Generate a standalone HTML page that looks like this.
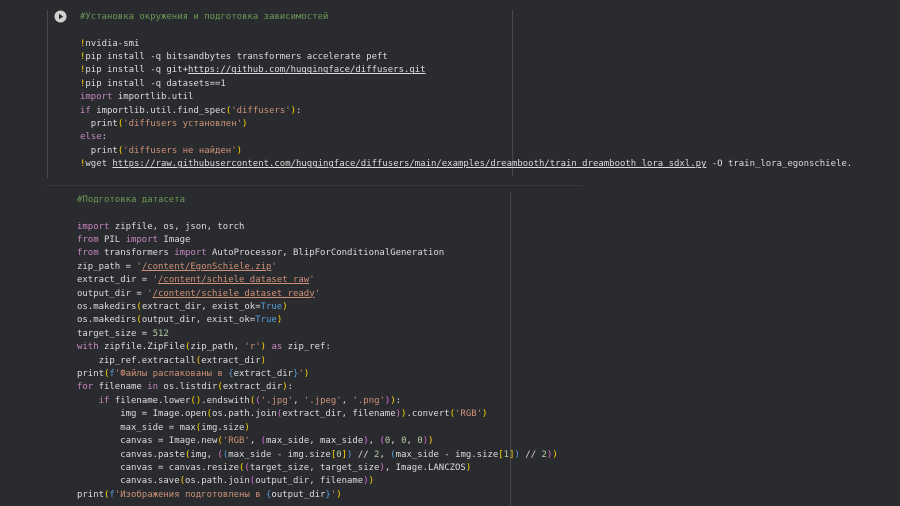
<!DOCTYPE html>
<html><head><meta charset="utf-8"><style>
body{margin:0;width:900px;height:506px;background:#2a2b2e;overflow:hidden;position:relative}
pre{position:absolute;margin:0;font-family:"DejaVu Sans Mono","Liberation Mono",monospace;font-size:8.98px;line-height:13.4px;color:#dcdcdc;white-space:pre}
.k{color:#c586c0}.s{color:#ce9178}.c{color:#6a9955}.n{color:#b5cea8}.b{color:#569cd6}.y{color:#ffd700}.p{color:#da70d6}
.u{text-decoration:underline}
.l{position:absolute;background:#45474b}
</style></head><body>
<div class="l" style="left:47px;top:10px;width:1px;height:168px"></div>
<div class="l" style="left:512px;top:10px;width:1px;height:166px"></div>
<div class="l" style="left:47px;top:185px;width:536px;height:1px;background:#38393c"></div>
<div class="l" style="left:510px;top:192px;width:1px;height:314px"></div>
<svg style="position:absolute;left:54px;top:10px" width="13" height="13"><circle cx="6.5" cy="6.5" r="6" fill="#d0d0d0"/><path d="M5 3.8L9.2 6.5L5 9.2Z" fill="#2a2b2e"/></svg>
<pre style="left:80px;top:10.8px"><span class="c">#Установка окружения и подготовка зависимостей</span>

<span class="y">!</span>nvidia-smi
<span class="y">!</span>pip install -q bitsandbytes transformers accelerate peft
<span class="y">!</span>pip install -q git+<span class="u">https://github.com/huggingface/diffusers.git</span>
<span class="y">!</span>pip install -q datasets==1
<span class="k">import</span> importlib.util
<span class="k">if</span> importlib.util.find_spec<span class="y">(</span><span class="s">'diffusers'</span><span class="y">)</span>:
  print<span class="y">(</span><span class="s">'diffusers установлен'</span><span class="y">)</span>
<span class="k">else</span>:
  print<span class="y">(</span><span class="s">'diffusers не найден'</span><span class="y">)</span>
<span class="y">!</span>wget <span class="u">https://raw.githubusercontent.com/huggingface/diffusers/main/examples/dreambooth/train_dreambooth_lora_sdxl.py</span> -O train_lora_egonschiele.</pre>
<pre style="left:77px;top:193.8px"><span class="c">#Подготовка датасета</span>

<span class="k">import</span> zipfile, os, json, torch
<span class="k">from</span> PIL <span class="k">import</span> Image
<span class="k">from</span> transformers <span class="k">import</span> AutoProcessor, BlipForConditionalGeneration
zip_path = <span class="s">'<span class="u">/content/EgonSchiele.zip</span>'</span>
extract_dir = <span class="s">'<span class="u">/content/schiele_dataset_raw</span>'</span>
output_dir = <span class="s">'<span class="u">/content/schiele_dataset_ready</span>'</span>
os.makedirs<span class="y">(</span>extract_dir, exist_ok=<span class="b">True</span><span class="y">)</span>
os.makedirs<span class="y">(</span>output_dir, exist_ok=<span class="b">True</span><span class="y">)</span>
target_size = <span class="n">512</span>
<span class="k">with</span> zipfile.ZipFile<span class="y">(</span>zip_path, <span class="s">'r'</span><span class="y">)</span> <span class="k">as</span> zip_ref:
    zip_ref.extractall<span class="y">(</span>extract_dir<span class="y">)</span>
print<span class="y">(</span><span class="b">f</span><span class="s">'Файлы распакованы в </span><span class="b">{</span>extract_dir<span class="b">}</span><span class="s">'</span><span class="y">)</span>
<span class="k">for</span> filename <span class="k">in</span> os.listdir<span class="y">(</span>extract_dir<span class="y">)</span>:
    <span class="k">if</span> filename.lower<span class="y">()</span>.endswith<span class="y">(</span><span class="p">(</span><span class="s">'.jpg'</span>, <span class="s">'.jpeg'</span>, <span class="s">'.png'</span><span class="p">)</span><span class="y">)</span>:
        img = Image.open<span class="y">(</span>os.path.join<span class="p">(</span>extract_dir, filename<span class="p">)</span><span class="y">)</span>.convert<span class="y">(</span><span class="s">'RGB'</span><span class="y">)</span>
        max_side = max<span class="y">(</span>img.size<span class="y">)</span>
        canvas = Image.new<span class="y">(</span><span class="s">'RGB'</span>, <span class="p">(</span>max_side, max_side<span class="p">)</span>, <span class="p">(</span><span class="n">0</span>, <span class="n">0</span>, <span class="n">0</span><span class="p">)</span><span class="y">)</span>
        canvas.paste<span class="y">(</span>img, <span class="p">(</span><span class="b">(</span>max_side - img.size<span class="y">[</span><span class="n">0</span><span class="y">]</span><span class="b">)</span> // <span class="n">2</span>, <span class="b">(</span>max_side - img.size<span class="y">[</span><span class="n">1</span><span class="y">]</span><span class="b">)</span> // <span class="n">2</span><span class="p">)</span><span class="y">)</span>
        canvas = canvas.resize<span class="y">(</span><span class="p">(</span>target_size, target_size<span class="p">)</span>, Image.LANCZOS<span class="y">)</span>
        canvas.save<span class="y">(</span>os.path.join<span class="p">(</span>output_dir, filename<span class="p">)</span><span class="y">)</span>
print<span class="y">(</span><span class="b">f</span><span class="s">'Изображения подготовлены в </span><span class="b">{</span>output_dir<span class="b">}</span><span class="s">'</span><span class="y">)</span></pre>
</body></html>
